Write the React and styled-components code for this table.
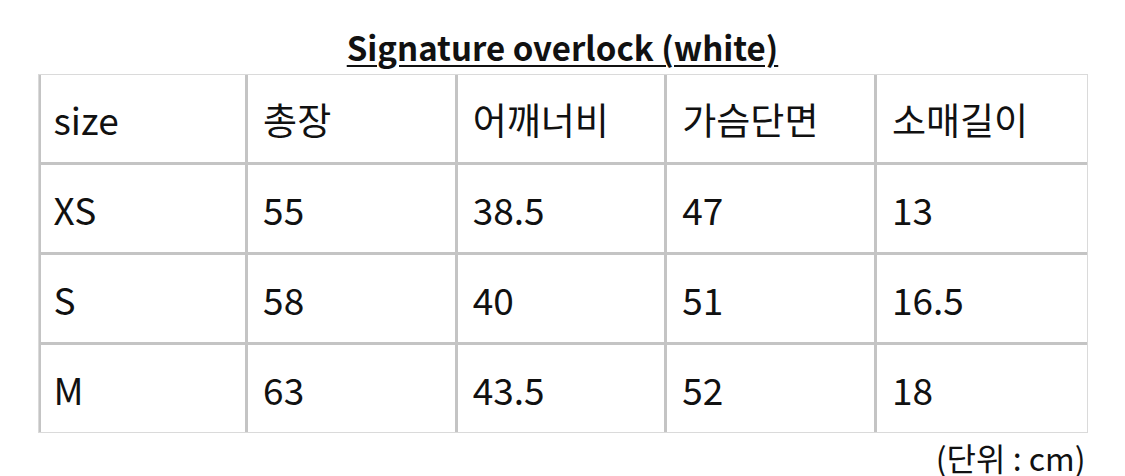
import React from "react";
import styled, { createGlobalStyle } from "styled-components";

const Global = createGlobalStyle`
  html, body { margin: 0; padding: 0; background: #fff; }
  body { font-family: "Noto Sans CJK KR", "Noto Sans", sans-serif; color: #111; overflow: hidden; }
`;

const Page = styled.div`
  width: 1050px;
  margin: 0 auto;
  padding-top: 26px;
`;

const Title = styled.h2`
  margin: 0 0 6px;
  text-align: center;
  font-size: 33px;
  line-height: 42px;
  font-weight: 700;
  text-decoration: underline;
  text-decoration-thickness: 2px;
  text-underline-offset: 4px;
`;

const Table = styled.table`
  width: 100%;
  border-collapse: separate;
  border-spacing: 0;
  border: 1px solid #dadada;
  table-layout: fixed;
`;

const Cell = styled.td`
  height: 87px;
  padding: 0 15px;
  border-style: solid;
  border-color: #c4c4c4;
  border-width: 0 ${p => (p.$last ? 0 : 3)}px ${p => (p.$lastRow ? 0 : 3)}px 0;
  box-shadow: ${p => (p.$first ? "inset 2px 0 0 #c4c4c4" : "none")};
  font-size: 37px;
  line-height: 44px;
  font-weight: 400;
  text-align: left;
  vertical-align: middle;
  color: #111;
`;

const Note = styled.div`
  text-align: right;
  padding-right: 2px;
  margin-top: 4px;
  font-size: 32px;
  line-height: 40px;
`;

const rows = [
  ["size", "총장", "어깨너비", "가슴단면", "소매길이"],
  ["XS", "55", "38.5", "47", "13"],
  ["S", "58", "40", "51", "16.5"],
  ["M", "63", "43.5", "52", "18"],
];

export default function App() {
  return (
    <>
      <Global />
      <Page>
        <Title>Signature overlock (white)</Title>
        <Table>
          <tbody>
            {rows.map((r, i) => (
              <tr key={i}>
                {r.map((c, j) => (
                  <Cell key={j} $first={j === 0} $last={j === r.length - 1} $lastRow={i === rows.length - 1}>
                    {c}
                  </Cell>
                ))}
              </tr>
            ))}
          </tbody>
        </Table>
        <Note>(단위 : cm)</Note>
      </Page>
    </>
  );
}
